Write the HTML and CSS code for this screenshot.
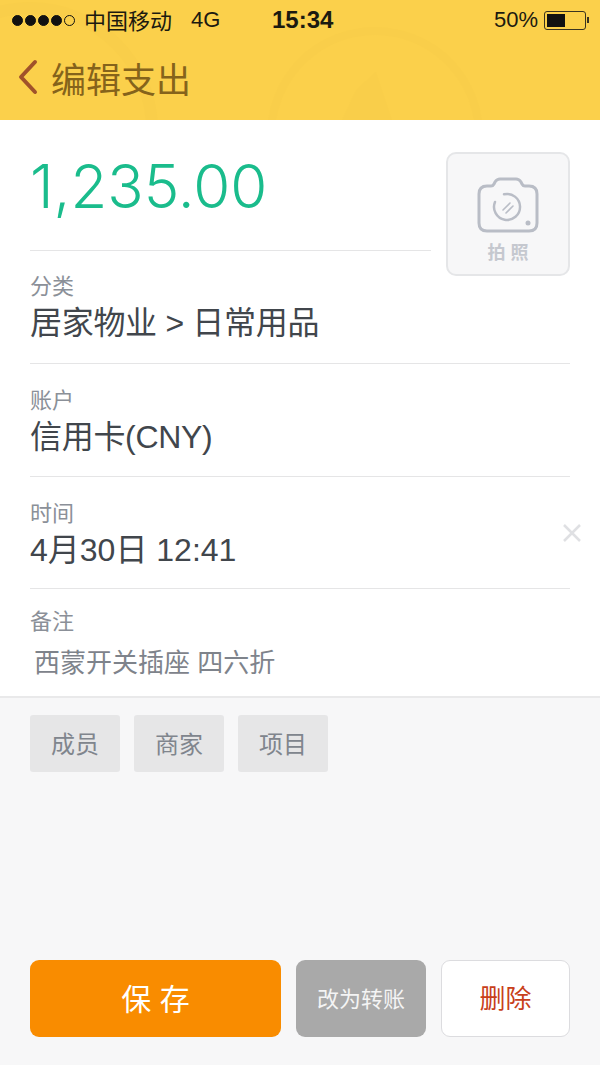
FILE: index.html
```html
<!DOCTYPE html>
<html lang="zh-CN">
<head>
    <meta charset="UTF-8">
    <meta name="viewport" content="width=device-width, initial-scale=1.0">
    <title>编辑支出</title>
    <link rel="stylesheet" href="styles.css">
</head>
<body>
<div class="phone">

    <!-- Header -->
    <div class="header">
        <svg class="header-art" width="600" height="120" viewBox="0 0 600 120">
            <circle cx="375" cy="135" r="104" fill="none" stroke="#f9ce4a" stroke-width="8"/>
            <path d="M342 120 L356 90 L376 72 L392 120 Z" fill="#f9ce4a"/>
            <circle cx="30" cy="130" r="122" fill="none" stroke="#f9ce4a" stroke-width="12"/>
        </svg>
        <div class="status-bar">
            <div class="status-left">
                <span class="signal">
                    <i class="dot"></i><i class="dot"></i><i class="dot"></i><i class="dot"></i><i class="dot empty"></i>
                </span>
                <span class="carrier">中国移动</span>
                <span class="network">4G</span>
            </div>
            <div class="status-time">15:34</div>
            <div class="status-right">
                <span>50%</span>
                <span class="battery"><span class="battery-level"></span></span>
                <span class="battery-tip"></span>
            </div>
        </div>
        <div class="title-bar">
            <svg class="back-icon" width="22" height="38" viewBox="0 0 22 38">
                <path d="M19 4 L5 19 L19 34" fill="none" stroke="#a0522a" stroke-width="4" stroke-linecap="round" stroke-linejoin="round"/>
            </svg>
            <span class="title">编辑支出</span>
        </div>
    </div>

    <!-- Form -->
    <div class="form">
        <div class="amount-row">
            <div class="amount-box">
                <div class="amount">1,235.00</div>
            </div>
            <div class="photo-button">
                <svg width="64" height="58" viewBox="0 0 64 58">
                    <path d="M11 9 H15 Q17 9 18 7 L19 5 Q21 2 24 2 H40 Q43 2 45 5 L46 7 Q47 9 49 9 H53 Q61 9 61 17 V46 Q61 54 53 54 H11 Q3 54 3 46 V17 Q3 9 11 9 Z" fill="none" stroke="#b9bdc6" stroke-width="3"/>
                    <path d="M28 17.3 A13 13 0 1 1 19 25" fill="none" stroke="#b9bdc6" stroke-width="2.5" stroke-linecap="round"/>
                    <path d="M27 33 L34 26 M30 36 L37 29" fill="none" stroke="#b9bdc6" stroke-width="1.6" stroke-linecap="round"/>
                    <circle cx="52" cy="46" r="2.5" fill="#b9bdc6"/>
                </svg>
                <span class="photo-label">拍 照</span>
            </div>
        </div>

        <div class="field field-category">
            <div class="field-label">分类</div>
            <div class="field-value">居家物业 &gt; 日常用品</div>
        </div>
        <div class="field">
            <div class="field-label">账户</div>
            <div class="field-value">信用卡(CNY)</div>
        </div>
        <div class="field field-time">
            <div class="field-label">时间</div>
            <div class="field-value">4月30日 12:41</div>
            <svg class="clear-icon" width="20" height="20" viewBox="0 0 20 20">
                <path d="M2 2 L18 18 M18 2 L2 18" stroke="#dfe0e3" stroke-width="2.5"/>
            </svg>
        </div>
        <div class="field field-note">
            <div class="field-label">备注</div>
            <div class="note-value">西蒙开关插座 四六折</div>
        </div>
    </div>

    <!-- Tags -->
    <div class="tags">
        <div class="tag">成员</div>
        <div class="tag">商家</div>
        <div class="tag">项目</div>
    </div>

    <!-- Buttons -->
    <div class="actions">
        <button class="btn btn-save">保 存</button>
        <button class="btn btn-transfer">改为转账</button>
        <button class="btn btn-delete">删除</button>
    </div>
</div>
</body>
</html>
```

FILE: styles.css
```css
* {
    margin: 0;
    padding: 0;
    box-sizing: border-box;
}

body {
    font-family: "Liberation Sans", "Noto Sans CJK SC", sans-serif;
    background-color: #f7f7f8;
    color: #3c4146;
}

.phone {
    width: 600px;
    height: 1065px;
    display: flex;
    flex-direction: column;
    overflow: hidden;
}

/* Header */
.header {
    position: relative;
    height: 120px;
    background-color: #fbd04b;
    overflow: hidden;
    flex-shrink: 0;
}

.header-art {
    position: absolute;
    top: 0;
    left: 0;
}

.status-bar {
    position: relative;
    height: 40px;
    display: flex;
    align-items: center;
    justify-content: space-between;
    padding: 0 11px 0 12px;
    font-size: 22px;
    color: #1c1a10;
}

.status-left {
    width: 260px;
    display: flex;
    align-items: center;
}

.signal {
    display: flex;
    gap: 2px;
    margin-right: 9px;
}

.dot {
    width: 11px;
    height: 11px;
    border-radius: 50%;
    background: #111;
    border: 1px solid #111;
}

.dot.empty {
    background: none;
}

.carrier {
    margin-right: 19px;
    margin-top: -3px;
}

.status-time {
    font-size: 24px;
    font-weight: bold;
    position: absolute;
    left: 272px;
}

.status-right {
    display: flex;
    align-items: center;
}

.battery {
    width: 42px;
    height: 19px;
    margin-left: 6px;
    border: 1px solid #3a3420;
    border-radius: 3px;
    padding: 2px;
}

.battery-level {
    display: block;
    width: 50%;
    height: 100%;
    background: #111;
}

.battery-tip {
    width: 2px;
    height: 6px;
    margin-left: 1px;
    background: #3a3420;
}

.title-bar {
    position: relative;
    height: 80px;
    display: flex;
    align-items: center;
    padding: 0 0 6px 16px;
}

.title {
    margin-left: 13px;
    font-size: 35px;
    color: #85631b;
}

/* Form */
.form {
    background-color: #fff;
    padding-left: 30px;
    padding-right: 30px;
    border-bottom: 2px solid #e9e9ea;
    height: 578px;
    flex-shrink: 0;
}

.amount-row {
    display: flex;
    justify-content: space-between;
    height: 130px;
    padding-top: 32px;
}

.amount-box {
    width: 401px;
    height: 99px;
    border-bottom: 1px solid #e5e5e6;
}

.amount {
    font-family: Inter, "Liberation Sans", sans-serif;
    font-weight: 300;
    font-size: 60px;
    line-height: 68px;
    color: #1abc8c;
}

.photo-button {
    width: 124px;
    height: 124px;
    background-color: #f7f7f8;
    border: 2px solid #e5e6e8;
    border-radius: 10px;
    display: flex;
    flex-direction: column;
    align-items: center;
    padding-top: 23px;
}

.photo-label {
    font-size: 18px;
    font-weight: bold;
    color: #c5c8cf;
    line-height: 24px;
    margin-top: 6px;
}

.field {
    position: relative;
    height: 113px;
    padding-top: 23px;
    border-bottom: 1px solid #e5e5e6;
}

.field-label {
    font-size: 22px;
    line-height: 28px;
    color: #8b9098;
}

.field-value {
    font-size: 32px;
    line-height: 44px;
    letter-spacing: -0.3px;
    color: #41464c;
}

.field-category {
    height: 114px;
    padding-top: 23px;
}

.field-time {
    height: 112px;
}

.field-time .field-value {
    letter-spacing: 0;
}

.field-note {
    border-bottom: none;
    height: 109px;
    padding-top: 19px;
}

.note-value {
    font-size: 26px;
    line-height: 40px;
    color: #7e838b;
    padding-left: 4px;
    margin-top: 7px;
}

.clear-icon {
    position: absolute;
    right: -12px;
    top: 46px;
}

/* Tags */
.tags {
    display: flex;
    gap: 14px;
    padding: 17px 30px 0;
}

.tag {
    width: 90px;
    height: 57px;
    background-color: #e6e6e7;
    border-radius: 3px;
    display: flex;
    align-items: center;
    justify-content: center;
    padding-bottom: 2px;
    font-size: 24px;
    color: #80858d;
}

/* Buttons */
.actions {
    display: flex;
    margin-top: 188px;
    padding: 0 30px;
    gap: 15px;
}

.btn {
    height: 77px;
    border: none;
    border-radius: 9px;
    padding-bottom: 4px;
    font-family: inherit;
}

.btn-save {
    width: 251px;
    background-color: #f98c00;
    color: #fff;
    font-size: 30px;
}

.btn-transfer {
    width: 130px;
    background-color: #a9a9a9;
    color: #f4f4f4;
    font-size: 22px;
}

.btn-delete {
    width: 129px;
    background-color: #fff;
    border: 1px solid #dcdcdf;
    color: #c8401a;
    font-size: 26px;
}
```
